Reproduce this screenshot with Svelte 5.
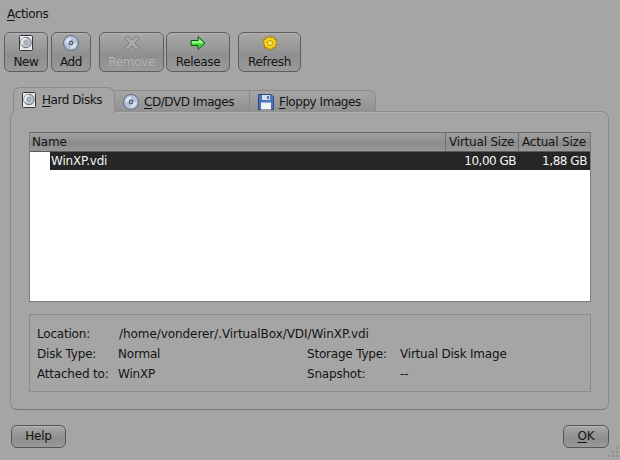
<script>
  const tools = [
    { id: 'disk', label: 'New', cls: 'new' },
    { id: 'cd', label: 'Add', cls: 'add' },
    { id: 'x', label: 'Remove', cls: 'remove', off: true },
    { id: 'arrow', label: 'Release', cls: 'release' },
    { id: 'gear', label: 'Refresh', cls: 'refresh' }
  ];
</script>

{#snippet icon(id)}
  <svg class="ico" viewBox="0 0 16 16" width="16" height="16">
    {#if id === 'disk'}
      <rect x="1.5" y="0.5" width="13" height="15" rx="1" fill="#e6e8ec" stroke="#33363c"/>
      <circle cx="8" cy="7.5" r="5.2" fill="#bcc2cc" stroke="#6c727c"/>
      <path d="M4.6 10 A4.2 4.2 0 0 1 8 3.4" fill="none" stroke="#f4f5f7" stroke-width="1.6"/>
      <circle cx="8" cy="7.5" r="1.4" fill="#f0f1f3" stroke="#5a606a" stroke-width="0.7"/>
    {:else if id === 'cd'}
      <circle cx="8" cy="8" r="7.5" fill="#b4c3da" stroke="#5f6c80"/>
      <path d="M2.5 8 A5.5 5.5 0 0 1 8 2.5 L8 6 A2 2 0 0 0 6 8 Z" fill="#dfe6f0"/>
      <path d="M13.5 8 A5.5 5.5 0 0 1 8 13.5 L8 10 A2 2 0 0 0 10 8 Z" fill="#dbe3ee"/>
      <circle cx="8" cy="8" r="2.4" fill="#56617a"/>
      <circle cx="8" cy="8" r="1.1" fill="#c4ccd8"/>
    {:else if id === 'floppy'}
      <path d="M0.5 0.5 H13 L15.5 3 V15.5 H0.5 Z" fill="#4d74b8" stroke="#2b4a86"/>
      <rect x="4" y="1" width="8" height="5" fill="#d8deea"/>
      <rect x="9" y="2" width="2" height="3" fill="#4d74b8"/>
      <rect x="3" y="8.5" width="10" height="7" fill="#f2f2f2"/>
    {:else if id === 'x'}
      <path d="M3.5 1 L8 5 L12.5 1 L15 3.5 L11 8 L15 12.5 L12.5 15 L8 11 L3.5 15 L1 12.5 L5 8 L1 3.5 Z" fill="#a9a9a9" stroke="#7d7d7d"/>
    {:else if id === 'arrow'}
      <path d="M1 5.5 H8 V1.5 L15 8 L8 14.5 V10.5 H1 Z" fill="#3fe03a" stroke="#0f5e12" stroke-linejoin="round"/>
      <path d="M2 6.5 H9 V4 L13 8 H2 Z" fill="#bff7b4"/>
    {:else}
      <path d="M8 0.5 L9.6 3 L12.2 1.8 L12.4 4.6 L15.2 4.8 L13.8 7.2 L15.5 9 L13 10.2 L13.6 13 L10.8 12.6 L9.6 15.2 L8 13.2 L6.2 15.2 L5.2 12.6 L2.4 13 L3 10.2 L0.5 9 L2.2 7.2 L0.8 4.8 L3.6 4.6 L3.8 1.8 L6.4 3 Z" fill="#f4d41e" stroke="#a8780a" stroke-width="0.9"/>
      <circle cx="8" cy="8" r="2.6" fill="#f9e860" stroke="#b58e0a" stroke-width="0.8"/>
    {/if}
  </svg>
{/snippet}

<div class="window">
  <div class="menubar"><span><u>A</u>ctions</span></div>

  <div class="toolbar">
    {#each tools as t}
      <button class="tool {t.cls}" class:off={t.off}>
        {@render icon(t.id)}
        <span>{t.label}</span>
      </button>
    {/each}
  </div>

  <div class="tabs">
    <div class="tab active">{@render icon('disk')}<span><u>H</u>ard Disks</span></div>
    <div class="tab second">{@render icon('cd')}<span><u>C</u>D/DVD Images</span></div>
    <div class="tab third">{@render icon('floppy')}<span><u>F</u>loppy Images</span></div>
  </div>

  <div class="pane">
    <div class="tree">
      <div class="head">
        <div class="hname">Name</div>
        <div class="hvirt">Virtual Size</div>
        <div class="hact">Actual Size</div>
      </div>
      <div class="row">
        <div class="cname">WinXP.vdi</div>
        <div class="cvirt">10,00 GB</div>
        <div class="cact">1,88 GB</div>
      </div>
    </div>

    <div class="details">
      <div class="line">
        <span class="k">Location:</span><span class="path">/home/vonderer/.VirtualBox/VDI/WinXP.vdi</span>
      </div>
      <div class="line">
        <span class="k">Disk Type:</span><span class="v">Normal</span>
        <span class="k2">Storage Type:</span><span>Virtual Disk Image</span>
      </div>
      <div class="line">
        <span class="k">Attached to:</span><span class="v">WinXP</span>
        <span class="k2">Snapshot:</span><span>--</span>
      </div>
    </div>
  </div>

  <div class="footer">
    <button class="dlg help">Help</button>
    <button class="dlg ok"><u>O</u>K</button>
  </div>

  <svg class="grip" viewBox="0 0 11 11" width="11" height="11">
    <rect x="8" y="0" width="2" height="2" fill="#8e8e8e"/>
    <rect x="4" y="4" width="2" height="2" fill="#8e8e8e"/>
    <rect x="8" y="4" width="2" height="2" fill="#8e8e8e"/>
    <rect x="0" y="8" width="2" height="2" fill="#8e8e8e"/>
    <rect x="4" y="8" width="2" height="2" fill="#8e8e8e"/>
    <rect x="8" y="8" width="2" height="2" fill="#8e8e8e"/>
  </svg>
</div>

<style>
  :global(body) { margin: 0; background: #a5a5a5; }
  .window {
    position: relative;
    width: 620px; height: 460px; box-sizing: border-box; overflow: hidden;
    background: #a5a5a5; color: #141414;
    font: 12px/15px "DejaVu Sans", sans-serif;
    letter-spacing: -0.2px;
    display: flex; flex-direction: column;
  }
  .grip { position: absolute; right: 1px; bottom: 2px; }
  .ico { flex: none; display: block; }
  u { text-underline-offset: 2px; text-decoration-thickness: 1px; }
  .menubar { height: 32px; padding: 7px 0 0 7px; box-sizing: border-box; letter-spacing: -0.35px; }
  .toolbar { display: flex; height: 40px; padding-left: 4px; }
  button { font: inherit; color: inherit; padding: 0; margin: 0; letter-spacing: inherit; }
  .tool {
    box-sizing: border-box; height: 40px; display: flex; flex-direction: column; align-items: center;
    padding-top: 2px;
    border: 1px solid #5e5e5e; border-radius: 6px;
    background: linear-gradient(#a9a9a9, #8f8f8f 60%, #9a9a9a);
    box-shadow: inset 0 1px 0 #b4b4b4;
    letter-spacing: -0.35px;
  }
  .tool span { margin-top: 4px; }
  .new { width: 44px; margin-right: 3px; }
  .add { width: 40px; margin-right: 8px; }
  .remove { width: 65px; margin-right: 2px; }
  .release { width: 64px; margin-right: 8px; }
  .refresh { width: 63px; }
  .off span { color: #b9b9b9; text-shadow: 0 0 1px #777; }
  .tabs { display: flex; margin: 15px 0 0 13px; height: 25px; align-items: flex-end; position: relative; z-index: 1; letter-spacing: -0.45px; }
  .tab {
    box-sizing: border-box; height: 22px; display: flex; align-items: center; gap: 4px;
    border-top: 1px solid #8c8c8c; background: linear-gradient(#a5a5a5, #909090);
  }
  .tab span { margin-top: 1px; }
  .active {
    width: 102px; padding: 0 0 1px 7px; background: #a5a5a5;
    border: 1px solid #8c8c8c; border-bottom: none; border-radius: 7px 7px 0 0;
    margin-bottom: -1px; height: 26px; gap: 5px;
  }
  .second { width: 135px; padding-left: 8px; border-right: 1px solid #888; gap: 5px; }
  .third { width: 126px; padding-left: 8px; border-right: 1px solid #8c8c8c; border-radius: 0 7px 0 0; gap: 5px; }
  .pane {
    box-sizing: border-box; width: 599px; height: 299px; margin: -1px 0 0 10px;
    border: 1px solid #8c8c8c; border-bottom-color: #777; border-radius: 7px;
    box-shadow: inset 0 1px 0 #b0b0b0;
    padding: 20px 18px 0 18px;
  }
  .tree {
    box-sizing: border-box; width: 562px; height: 170px; margin-left: 0; background: #fff;
    border: 1px solid #7d7d7d; border-top: 0; display: flex; flex-direction: column;
  }
  .head {
    display: flex; height: 20px; box-sizing: border-box; border-top: 1px solid #6a6a6a; border-bottom: 1px solid #5a5a5a;
    background: linear-gradient(#a0a0a0, #8b8b8b 60%, #999);
    line-height: 18px;
  }
  .hname { width: 416px; padding-left: 2px; box-sizing: border-box; border-right: 1px solid #6f6f6f; }
  .hvirt { width: 73px; padding-left: 3px; box-sizing: border-box; border-right: 1px solid #6f6f6f; white-space: nowrap; }
  .hact { flex: 1; padding-left: 3px; white-space: nowrap; }
  .row { display: flex; height: 18px; margin-left: 20px; background: #262626; color: #f4f4f4; line-height: 18px; }
  .cname { width: 396px; padding-left: 1px; box-sizing: border-box; }
  .cvirt { width: 70px; text-align: right; letter-spacing: -0.5px; }
  .cact { flex: 1; text-align: right; padding-right: 3px; letter-spacing: -0.45px; }
  .details {
    box-sizing: border-box; width: 562px; height: 78px; margin: 12px 0 0 0;
    border: 1px solid #8c8c8c;
    padding: 12px 7px 0 7px; display: flex; flex-direction: column; gap: 5px;
  }
  .line { display: flex; height: 15px; white-space: nowrap; }
  .k { width: 81px; }
  .v { width: 189px; }
  .k2 { width: 93px; }
  .path { letter-spacing: -0.07px; margin-left: 1px; }
  .footer { display: flex; justify-content: space-between; padding: 15px 11px 0 11px; }
  .dlg {
    box-sizing: border-box; height: 23px; border: 1px solid #555; border-radius: 6px;
    background: linear-gradient(#a8a8a8, #8e8e8e 60%, #9a9a9a);
    box-shadow: inset 0 1px 0 #b4b4b4;
  }
  .help { width: 55px; }
  .ok { width: 46px; }
</style>
